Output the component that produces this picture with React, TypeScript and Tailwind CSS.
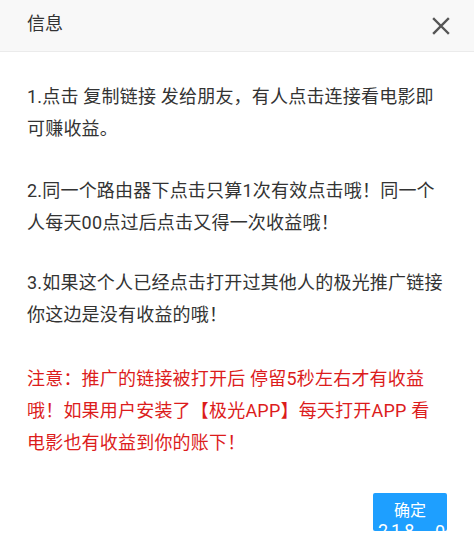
import React from "react";

const lines1 = ["1.点击 复制链接 发给朋友，有人点击连接看电影即", "可赚收益。"];
const lines2 = ["2.同一个路由器下点击只算1次有效点击哦！同一个", "人每天00点过后点击又得一次收益哦！"];
const lines3 = ["3.如果这个人已经点击打开过其他人的极光推广链接", "你这边是没有收益的哦！"];
const lines4 = ["注意：推广的链接被打开后 停留5秒左右才有收益", "哦！如果用户安装了【极光APP】每天打开APP 看", "电影也有收益到你的账下！"];

function Para({ lines, className }: { lines: string[]; className: string }) {
  return (
    <div className={className}>
      {lines.map((l, i) => (
        <div key={i} className="whitespace-nowrap">
          {l}
        </div>
      ))}
    </div>
  );
}

export default function App() {
  return (
    <div
      className="w-[474px] h-[546px] bg-white overflow-hidden flex flex-col"
      style={{ fontFamily: "Roboto, 'Noto Sans CJK SC', sans-serif" }}
    >
      <div className="h-[52px] shrink-0 bg-[#f8f8f8] border-b border-[#ebebeb] flex items-center justify-between pl-[27px] pr-[24px]">
        <span className="text-[18px] text-[#333] leading-none -mt-[3px]">信息</span>
        <svg width="18" height="18" viewBox="0 0 18 18" className="mt-[1px]">
          <path d="M2 2 L16 16 M16 2 L2 16" stroke="#555" strokeWidth="2.4" strokeLinecap="square" />
        </svg>
      </div>
      <div className="px-[27px] pt-[29px] text-[18px] leading-[32px] text-[#333] tracking-[0.2px]">
        <Para lines={lines1} className="mb-[30px]" />
        <Para lines={lines2} className="mb-[28px]" />
        <Para lines={lines3} className="mb-[32px]" />
        <Para lines={lines4} className="text-[#dc1c1c]" />
      </div>
      <div className="flex justify-end pr-[27px] mt-[34px]">
        <div className="relative w-[74px] h-[38px] bg-[#1e9fff] rounded-[2px] flex items-center justify-center text-white text-[16px] overflow-hidden">
          <span className="-mt-[2px]">确定</span>
          <span className="absolute left-[5px] top-[29px] text-[18px] leading-none text-white tracking-[3px] whitespace-nowrap">
            218
          </span>
          <span className="absolute left-[62px] top-[30px] text-[18px] leading-none text-white whitespace-nowrap">
            0
          </span>
        </div>
      </div>
    </div>
  );
}
